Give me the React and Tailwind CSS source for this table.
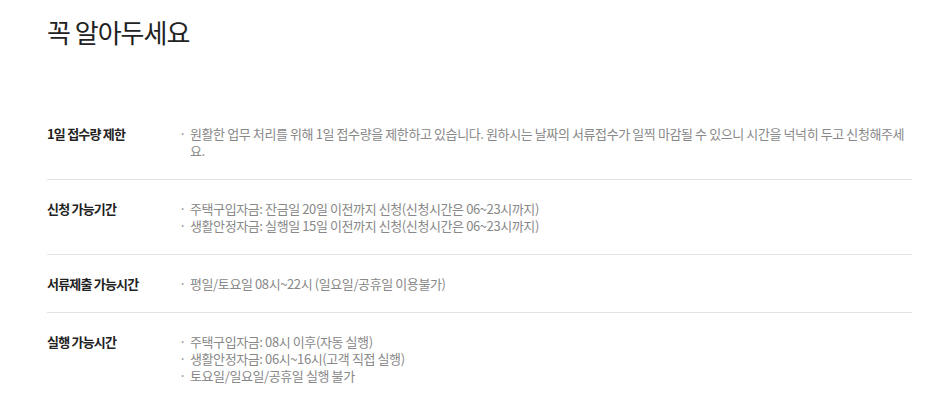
import React from "react";

const rows = [
  {
    label: "1일 접수량 제한",
    items: [
      "원활한 업무 처리를 위해 1일 접수량을 제한하고 있습니다. 원하시는 날짜의 서류접수가 일찍 마감될 수 있으니 시간을 넉넉히 두고 신청해주세요.",
    ],
  },
  {
    label: "신청 가능기간",
    items: [
      "주택구입자금: 잔금일 20일 이전까지 신청(신청시간은 06~23시까지)",
      "생활안정자금: 실행일 15일 이전까지 신청(신청시간은 06~23시까지)",
    ],
  },
  {
    label: "서류제출 가능시간",
    items: ["평일/토요일 08시~22시 (일요일/공휴일 이용불가)"],
  },
  {
    label: "실행 가능시간",
    items: [
      "주택구입자금: 08시 이후(자동 실행)",
      "생활안정자금: 06시~16시(고객 직접 실행)",
      "토요일/일요일/공휴일 실행 불가",
    ],
  },
];

export default function App() {
  return (
    <div
      className="bg-white w-[949px] h-[404px] overflow-hidden pl-[47px] pr-[37px]"
      style={{ fontFamily: '"Noto Sans CJK KR", "Noto Sans", sans-serif' }}
    >
      <h1 className="pt-[16px] text-[26px] leading-[32px] font-normal text-[#222] tracking-[-1px]">
        꼭 알아두세요
      </h1>
      <div className="mt-[57px]">
        {rows.map((r, i) => (
          <div
            key={i}
            className={`flex py-[20px] ${i < rows.length - 1 ? "border-b border-[#e3e3e3]" : ""}`}
          >
            <div className="w-[132px] shrink-0 text-[13px] leading-[17px] font-bold text-[#222] tracking-[-0.8px]">
              {r.label}
            </div>
            <ul className="flex-1 text-[13px] leading-[17px] text-[#888] tracking-[-0.4px]">
              {r.items.map((t, j) => (
                <li key={j} className="flex">
                  <span className="w-[11px] shrink-0">·</span>
                  <span>{t}</span>
                </li>
              ))}
            </ul>
          </div>
        ))}
      </div>
    </div>
  );
}
